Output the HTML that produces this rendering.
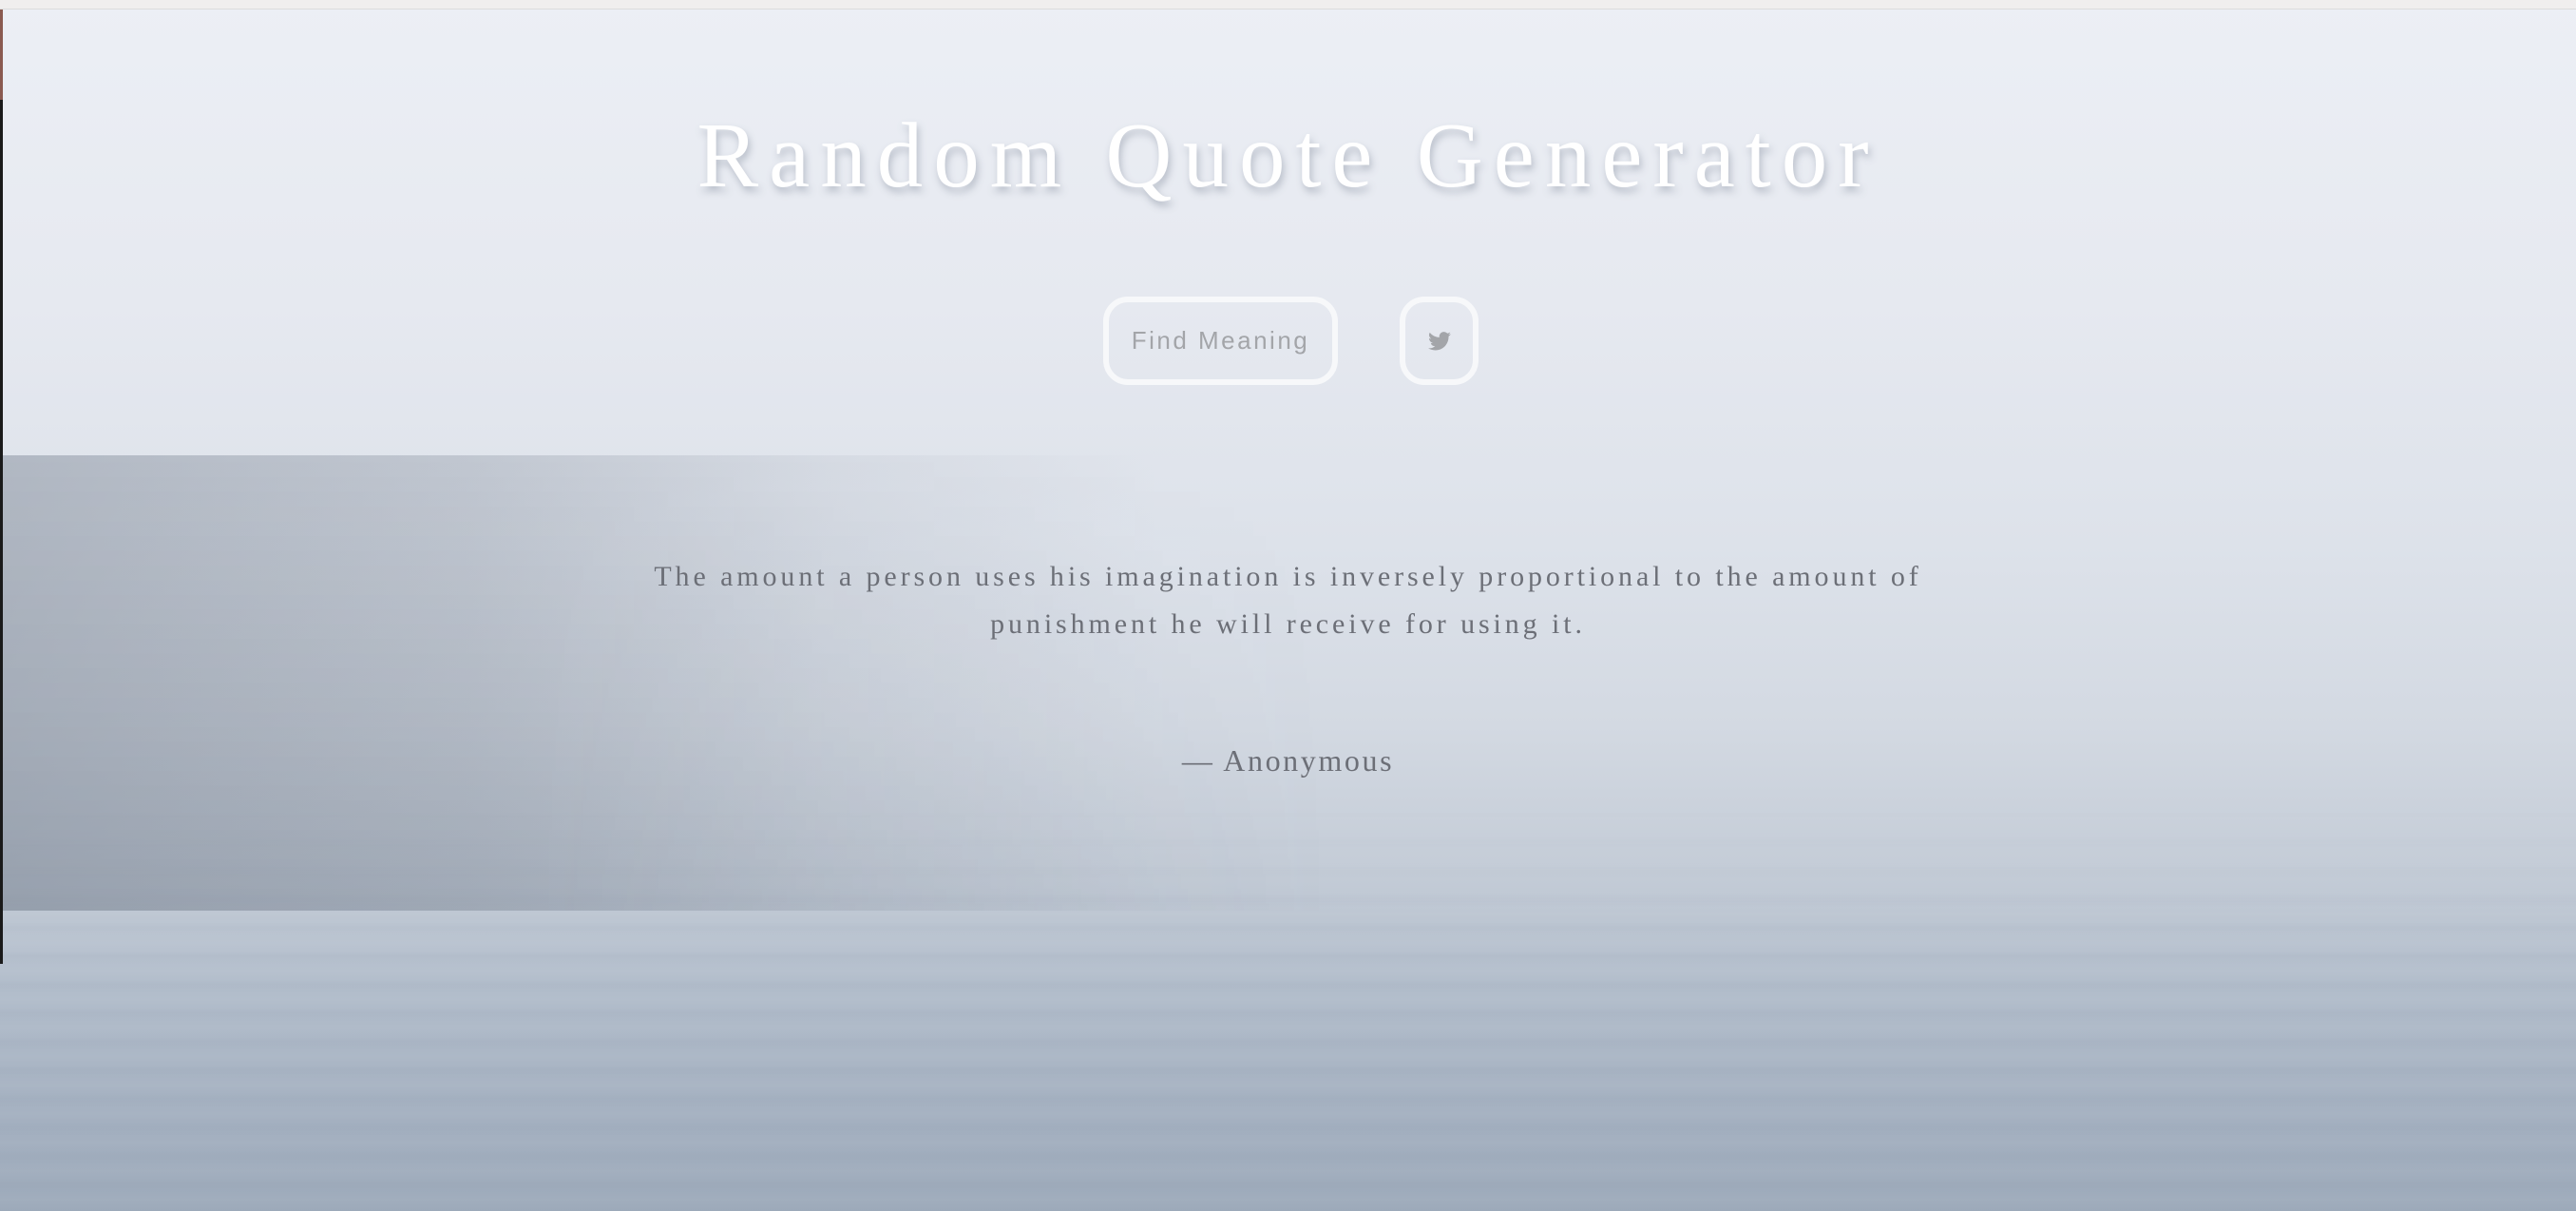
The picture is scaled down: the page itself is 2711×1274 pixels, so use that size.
<!DOCTYPE html>
<html><head><meta charset="utf-8">
<style>
html,body{margin:0;padding:0;width:2711px;height:1274px;overflow:hidden}
body{position:relative;font-family:"Liberation Serif",serif;
background:linear-gradient(180deg,#eceff5 0%,#e6e9f0 25%,#dde2ea 45%,#d3d9e2 60%,#c4ccd7 72%,#b2bdcb 82%,#a5b1c1 92%,#9eabbb 100%);}
.topbar{position:absolute;left:0;top:0;width:2711px;height:9px;background:#f0eeee;border-bottom:1px solid #dcdcdc}
.leftstrip{position:absolute;left:0;top:10px;width:3px;height:1004px;background:#1a1a1a}
.leftstrip2{position:absolute;left:0;top:10px;width:3px;height:95px;background:#8a5a50}
.sea{position:absolute;left:0;top:850px;width:2711px;height:424px;
background:repeating-linear-gradient(180deg,rgba(120,135,155,0) 0px,rgba(120,135,155,.07) 6px,rgba(120,135,155,0) 14px,rgba(255,255,255,.03) 22px,rgba(120,135,155,0) 30px);
-webkit-mask:linear-gradient(180deg,transparent,#000 40%);}
.band{position:absolute;left:3px;top:479px;width:2708px;height:479px;
background:linear-gradient(90deg,rgba(120,130,145,.45) 0%,rgba(120,130,145,.3) 18%,rgba(120,130,145,.1) 32%,rgba(120,130,145,0) 45%);}
.band2{position:absolute;left:3px;top:479px;width:1400px;height:479px;
background:linear-gradient(180deg,rgba(255,255,255,0) 0%,rgba(90,100,115,.12) 100%);
-webkit-mask:linear-gradient(90deg,#000 40%,transparent 100%);}
h1{position:absolute;left:0;width:2711px;top:104px;margin:0;text-align:center;font-weight:normal;
font-size:97px;letter-spacing:11px;color:#fff;text-shadow:2px 5px 8px rgba(90,100,120,.35);line-height:120px}
.btn{position:absolute;top:312px;height:93px;box-sizing:border-box;border:6px solid #f7f8fa;border-radius:26px;
font-family:"Liberation Sans",sans-serif;color:#a3a5a9;font-size:26px;letter-spacing:2.5px;display:flex;align-items:center;justify-content:center}
.b1{left:1161px;width:247px}
.b2{left:1473px;width:83px}
.q{position:absolute;left:0;width:2711px;top:582px;text-align:center;font-size:30px;letter-spacing:3.9px;line-height:50px;color:#6c6f77}
.a{position:absolute;left:0;width:2711px;top:782px;text-align:center;font-size:32px;letter-spacing:2.6px;color:#6c6f77}
</style></head><body>
<div class="sea"></div>
<div class="band"></div><div class="band2"></div>
<div class="topbar"></div>
<div class="leftstrip"></div><div class="leftstrip2"></div>
<h1>Random Quote Generator</h1>
<div class="btn b1">Find Meaning</div>
<div class="btn b2"><svg width="24" height="20" viewBox="0 0 24 20"><path fill="#a3a5a9" d="M24 2.4a9.8 9.8 0 0 1-2.8.8A4.9 4.9 0 0 0 23.3.5a9.9 9.9 0 0 1-3.1 1.2A4.9 4.9 0 0 0 11.8 6 14 14 0 0 1 1.7.9a4.9 4.9 0 0 0 1.5 6.6 4.9 4.9 0 0 1-2.2-.6 4.9 4.9 0 0 0 3.900 4.9 4.9 4.9 0 0 1-2.2.1 4.9 4.9 0 0 0 4.6 3.4A9.9 9.9 0 0 1 0 17.3 14 14 0 0 0 7.5 19.5c9.1 0 14-7.5 14-14v-.6A10 10 0 0 0 24 2.4z"/></svg></div>
<div class="q">The amount a person uses his imagination is inversely proportional to the amount of<br>punishment he will receive for using it.</div>
<div class="a">— Anonymous</div>
</body></html>
